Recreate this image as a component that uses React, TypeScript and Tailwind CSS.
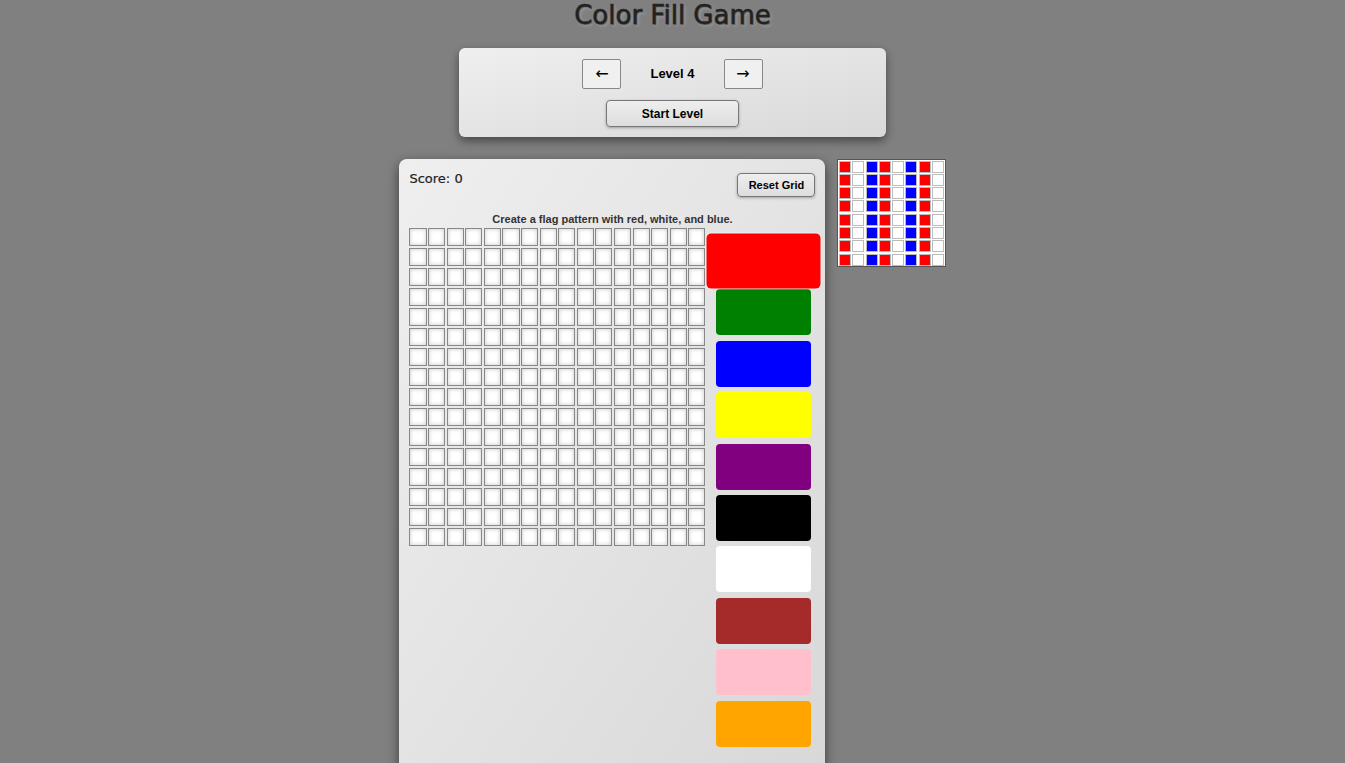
const COLORS = [
  "#ff0000",
  "#008000",
  "#0000ff",
  "#ffff00",
  "#800080",
  "#000000",
  "#ffffff",
  "#a52a2a",
  "#ffc0cb",
  "#ffa500",
];

// target flag: red / white / blue stripes, same on every row
const PATTERN = ["#ff0000", "#ffffff", "#0000ff", "#ff0000", "#ffffff", "#0000ff", "#ff0000", "#ffffff"];

const App = () => {
  const selected = 0;

  return (
    <div className="h-screen overflow-hidden bg-[#808080] flex flex-col items-center font-['Liberation_Sans',Arial,sans-serif]">
      <h1 className="h-[31px] leading-[31px] text-[26px] text-[#222] font-['DejaVu_Sans',sans-serif] [-webkit-text-stroke:0.5px_#222] [text-shadow:1px_1px_1px_rgba(0,0,0,0.35),2px_2px_3px_rgba(255,255,255,0.25)]">
        Color Fill Game
      </h1>

      {/* level controls */}
      <div className="mt-[17px] w-[427px] rounded-[6px] bg-linear-to-br from-[#efefef] to-[#d9d9d9] shadow-[0_4px_10px_rgba(0,0,0,0.45)] pt-[11px] pb-[10px] flex flex-col items-center gap-[11px]">
        <div className="flex items-center gap-[29px]">
          <button className="w-[39px] h-[30px] bg-[#f0f0f0] border border-[#888] rounded-[2px] text-[16px] leading-none text-black font-['DejaVu_Sans',sans-serif]">
            ←
          </button>
          <span className="text-[13px] font-bold text-black">Level 4</span>
          <button className="w-[39px] h-[30px] bg-[#f0f0f0] border border-[#888] rounded-[2px] text-[16px] leading-none text-black font-['DejaVu_Sans',sans-serif]">
            →
          </button>
        </div>
        <button className="w-[133px] h-[27px] rounded-[4px] border border-[#777] bg-linear-to-b from-[#eeeeee] to-[#dddddd] shadow-[0_1px_3px_rgba(0,0,0,0.3)] text-[12px] font-bold text-black">
          Start Level
        </button>
      </div>

      <div className="mt-[22px] flex items-start gap-[12px]">
        {/* game board */}
        <div className="w-[426px] rounded-[8px] bg-linear-to-br from-[#efefef] to-[#d8d8d8] shadow-[0_4px_12px_rgba(0,0,0,0.55)] p-[10px] pb-[24px]">
          <div className="flex items-start justify-between">
            <div className="pt-[1px] text-[13px] leading-[18px] text-[#222] font-['DejaVu_Sans',sans-serif] [-webkit-text-stroke:0.2px_#222]">Score: 0</div>
            <button className="mt-[4px] w-[78px] h-[24px] rounded-[4px] border border-[#777] bg-linear-to-b from-[#eeeeee] to-[#dddddd] shadow-[0_1px_3px_rgba(0,0,0,0.3)] text-[11px] font-bold text-black">
              Reset Grid
            </button>
          </div>
          <p className="mt-[15px] text-center text-[11px] leading-[14px] font-bold text-[#333]">
            Create a flag pattern with red, white, and blue.
          </p>

          <div className="mt-[2px] flex items-start">
            <div className="w-[296px] grid grid-cols-16 gap-x-[1.5px] gap-y-[2px]">
              {Array.from({ length: 256 }).map((_, i) => (
                <div
                  key={i}
                  className="h-[18px] border border-[#888] bg-white shadow-[inset_0_0_4px_rgba(0,0,0,0.22)]"
                />
              ))}
            </div>

            <div className="ml-[11px] pt-[10px] flex flex-col gap-[5.4px]">
              {COLORS.map((c, i) => (
                <div
                  key={c}
                  className={`w-[95px] h-[46px] rounded-[4px] ${i === selected ? "scale-[1.2] ring-1 ring-[rgba(255,255,255,0.35)]" : ""}`}
                  style={{ backgroundColor: c }}
                />
              ))}
            </div>
          </div>
        </div>

        {/* target preview */}
        <div className="border border-[#555] bg-white p-[0.5px] grid grid-cols-8 gap-[1.3px]">
          {Array.from({ length: 64 }).map((_, i) => (
            <div
              key={i}
              className="w-[12px] h-[12px] border border-[#bbb]"
              style={{ backgroundColor: PATTERN[i % 8] }}
            />
          ))}
        </div>
      </div>
    </div>
  );
};

export default App;
